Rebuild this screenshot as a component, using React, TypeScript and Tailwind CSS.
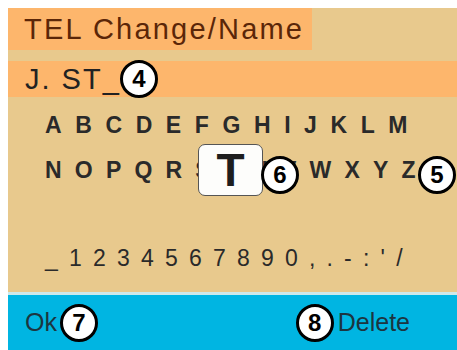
const font = { fontFamily: '"Liberation Sans", Arial, sans-serif' };

function Badge({ n, className = '' }: { n: string; className?: string }) {
  return (
    <div
      className={`flex h-[38px] w-[38px] items-center justify-center rounded-full border-[3px] border-black bg-white text-[24px] leading-none font-bold tracking-normal text-black ${className}`}
    >
      {n}
    </div>
  );
}

export default function App() {
  return (
    <div className="h-[350px] w-[457px] overflow-hidden bg-white pt-2 pl-2" style={font}>
      <div className="relative flex h-full flex-col bg-[#e8c98d]">
        <div className="flex h-[42px] w-[304px] items-center bg-[#fdb66c] pl-[16px] text-[29px] leading-none tracking-[2.2px] text-[#5b2608]">
          TEL Change/Name
        </div>

        <div className="mt-[11px] flex h-[36px] items-center bg-[#fdb66c] pl-[17px] text-[29px] leading-none tracking-[2px] text-[#222]">
          <span>J. ST_</span>
          <Badge n="4" className="ml-[-1px] shrink-0" />
        </div>

        <div className="mt-[17px] pl-[37px] text-[23px] leading-none font-bold tracking-[13.6px] text-[#2a2a2a]">
          ABCDEFGHIJKLM
        </div>

        <div className="relative mt-[22px] pl-[37px] text-[23px] leading-none font-bold tracking-[13.2px] text-[#2a2a2a]">
          NOPQRSTUVWXYZ
          <div className="absolute top-[-15px] left-[190px] flex h-[52px] w-[65px] items-center justify-center rounded-[7px] border-[1.5px] border-[#555] bg-[#fdfdfb] text-[46px] leading-none font-bold tracking-normal text-[#1e1e1e]">
            T
          </div>
          <Badge n="6" className="absolute top-[-3px] left-[253px]" />
          <Badge n="5" className="absolute top-[-3px] left-[410px]" />
        </div>

        <div className="mt-[65px] pl-[37px] text-[23px] leading-none tracking-[11.2px] text-[#2a2a2a]">
          _1234567890,.-:'/
        </div>

        <div className="mt-auto h-[3px] bg-[#cfe9ea]" />
        <div className="flex h-[55px] items-center bg-[#00b5e2] pr-[47px] pl-[17px] text-[25px] leading-none text-[#1c3540]">
          <span>Ok</span>
          <Badge n="7" className="ml-[3px]" />
          <div className="flex-1" />
          <Badge n="8" className="mr-[4px]" />
          <span>Delete</span>
        </div>
      </div>
    </div>
  );
}
